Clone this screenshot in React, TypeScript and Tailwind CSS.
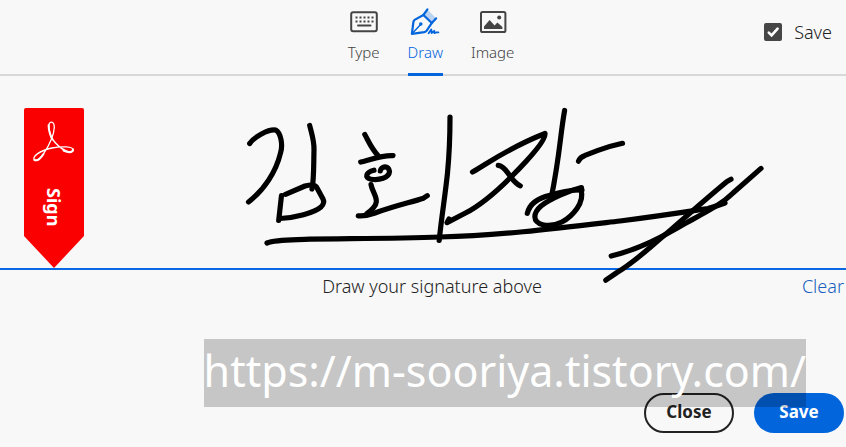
import { useState } from 'react';
import type { ReactNode } from 'react';
import clsx from 'clsx';

type Mode = 'type' | 'draw' | 'image';

function KeyboardIcon() {
  return (
    <svg width="28" height="22" viewBox="0 0 28 22" fill="none" aria-hidden="true">
      <rect x="1.2" y="1.2" width="25.6" height="19" rx="2" stroke="currentColor" strokeWidth="2" />
      <path d="M5.5 6.6h18M5.5 10.4h18" stroke="currentColor" strokeWidth="2" strokeDasharray="2 2" />
      <path d="M8 14.4h12.5" stroke="currentColor" strokeWidth="2" strokeLinecap="round" />
    </svg>
  );
}

function PenIcon() {
  return (
    <svg width="30" height="28" viewBox="0 0 30 28" fill="none" aria-hidden="true">
      <path d="M13.6 7 17.4 1.6 26 10.2l-4.2 4.6z" fill="currentColor" opacity="0.25" />
      <g stroke="currentColor" strokeWidth="2.2" strokeLinecap="round" strokeLinejoin="round">
        <path d="M17.4 1.4 13.4 7l8.4 8 4.2-4.6" />
        <path d="M13.4 7 5 11.6Q3.6 12.4 3.4 14L1.9 25.8l12.3-1.6q1.6-.3 2.5-1.6l5-7.4" />
        <path d="M2.2 25.6 10.4 16.8" strokeWidth="1.4" />
        <path d="M18.6 25.2 21.3 21.4 21.6 25.2 24.2 22.8 24.4 25.2 26.2 24.4 28.4 24.4" strokeWidth="1.8" />
      </g>
      <circle cx="10.8" cy="16" r="1.8" fill="currentColor" />
    </svg>
  );
}

function ImageIcon() {
  return (
    <svg width="28" height="24" viewBox="0 0 28 24" fill="none" aria-hidden="true">
      <rect x="2" y="2" width="24.4" height="20" rx="1.6" stroke="currentColor" strokeWidth="2" />
      <path d="M5 19v-2.4L10.6 10l5 5.4 2.8-3 5 4.6v2z" fill="currentColor" />
      <circle cx="20.2" cy="7.6" r="2" fill="currentColor" />
    </svg>
  );
}

const TABS: { id: Mode; label: string; icon: ReactNode }[] = [
  { id: 'type', label: 'Type', icon: <KeyboardIcon /> },
  { id: 'draw', label: 'Draw', icon: <PenIcon /> },
  { id: 'image', label: 'Image', icon: <ImageIcon /> },
];

// Pen strokes, one path per stroke, in canvas coordinates.
const STROKES = [
  'M249.7 143.5C254 137 268 129 275.7 130C281 133 283 145 280.5 153C276 172 264 190 248.5 202',
  'M309.7 125.5C312 135 314.3 141 314 150C313.6 165 314 180 312 189',
  'M281.5 195.5L278.7 220.5',
  'M285.5 194.3L305 186Q314 183.5 316.5 187L323 199Q325 203 321 207C314 213 295 218 280 218.5',
  'M364.8 134.5C368 140 371 148 378 155.5',
  'M360.7 162C370 160 382 155 393 155.7',
  'M374 170.2C366 172 364 178 371 179.2C379 180.5 389 178 389.5 171.5C389 165 381 166 380.3 171',
  'M371 184.5C372 191 377 196 376.3 202C376 206 371 211 367 213.5',
  'M358.3 215.8C366 216.5 369 215 377 212.3C394 206 412 202 423.5 198.2L427.3 195.7',
  'M450 117C450 135 449.5 152 447.5 173C445 197 441.5 217 439.2 240.5',
  'M472.5 172C490 162 508 148 545 133.5C546 140 530 158 511 177C492 196 479 206 465 213.3L447 222.6L449 219',
  'M498.2 165.4C504 166 507 172 510 176Q516 184 520.3 185.8',
  'M564.6 110.5C560 136 560 155 551 199',
  'M578.5 161.2Q580 157 585 155.4L598 150.4Q610 146 622.5 143.3',
  'M527.3 213.3C530 203 538 198 550 195.4Q564 190 582 190',
  'M581.5 187.6C568 191 550 199 541 206C533 213 532 222 543 224.8C556 227.5 569 220 577 208.5C582 201 583 196 581 190',
  'M267 243C275 239.5 290 240 310 239.2C360 238.5 400 238.5 440 237C500 235.5 560 228 620 221C660 216 685 212 708 208.5Q717 206 725 203',
  'M611.2 256C640 249 662 237 686 223C708 211 722 204 733 193L761 168.4',
  'M605.8 280.2L617 272.5C635 262 650 247 668 232.3C690 213 707 198 727 181.5L731 179.3',
];

function SignRibbon() {
  return (
    <div className="ml-6 flex h-40 w-15 flex-col items-center rounded-t-xs bg-[#fb0000] pt-3 text-white [clip-path:polygon(0_0,100%_0,100%_80%,50%_100%,0_80%)]">
      <svg width="44" height="44" viewBox="0 0 44 44" fill="none" aria-hidden="true">
        <g stroke="currentColor" strokeLinecap="round">
          <path
            d="M19.5 18C16.5 10 15.5 2.2 19.4 2.2C23.6 2.2 22.8 11 19.5 19C15.8 28 8.5 40.5 3 40.5C-1.5 37 8 30.5 20 28C30 26 41 26.5 41.2 30C41 34 30 32.5 19.5 18Z"
            strokeWidth="1.3"
          />
          <path d="M16.6 5.2C16.5 10 18.8 17 20.5 19.3M31.5 30.5C36.5 33 41 32.8 41 29.6M11.5 34C8 39.5 5 41.4 2.3 39.8" strokeWidth="2" />
        </g>
      </svg>
      <span className="mt-6 text-lg leading-6 font-bold [writing-mode:vertical-rl]">Sign</span>
    </div>
  );
}

function SignatureCanvas() {
  return (
    <section className="relative border-b-2 border-[#0a68e4] pt-8">
      <SignRibbon />
      <svg
        className="absolute inset-x-0 top-0 h-[194px] w-full overflow-visible"
        viewBox="0 76 846 194"
        fill="none"
        role="img"
        aria-label="Signature"
      >
        <g stroke="#000" strokeWidth="5.2" strokeLinecap="round" strokeLinejoin="round">
          {STROKES.map(d => (
            <path key={d} d={d} />
          ))}
        </g>
      </svg>
    </section>
  );
}

export default function App() {
  const [mode, setMode] = useState<Mode>('draw');
  const [save, setSave] = useState(true);

  return (
    <main className="relative min-h-screen overflow-hidden bg-[#f8f8f8] font-['Noto_Sans','Noto_Sans_CJK_KR',sans-serif] text-[#222]">
      <header className="grid h-19 grid-cols-[1fr_auto_1fr] border-b-2 border-[#d8d8d8] pr-3.5 pl-7.5">
        <nav className="col-start-2 flex gap-7">
          {TABS.map(tab => (
            <button
              key={tab.id}
              type="button"
              onClick={() => setMode(tab.id)}
              aria-pressed={mode === tab.id}
              className={clsx(
                '-mb-0.5 flex flex-col items-center border-b-3 pt-2 text-[15px] leading-5',
                mode === tab.id ? 'border-[#0265dc] text-[#0265dc]' : 'border-transparent text-[#444]',
              )}
            >
              <span className="flex h-7 items-center">{tab.icon}</span>
              <span className="mt-1.5 font-light">{tab.label}</span>
            </button>
          ))}
        </nav>
        <label className="mt-0.5 flex items-center gap-3 justify-self-end pb-3 text-lg font-light">
          <span className="relative flex size-[18px]">
            <input
              type="checkbox"
              checked={save}
              onChange={e => setSave(e.target.checked)}
              className="size-[18px] appearance-none rounded-xs border-2 border-[#464646] checked:bg-[#464646]"
            />
            {save && (
              <svg
                className="pointer-events-none absolute inset-0"
                width="18"
                height="18"
                viewBox="0 0 18 18"
                fill="none"
                aria-hidden="true"
              >
                <path d="M4.8 9.6 7.6 12.4 13.6 5.6" stroke="#fff" strokeWidth="2.6" strokeLinecap="round" />
              </svg>
            )}
          </span>
          Save
        </label>
      </header>

      <SignatureCanvas />

      <div className="grid grid-cols-[1fr_auto_1fr] pt-0.5 pr-0.5 pl-5 text-lg leading-7 font-light">
        <p className="col-start-2">Draw your signature above</p>
        <button type="button" className="justify-self-end text-[#1a5fbe]">
          Clear
        </button>
      </div>

      <footer className="flex justify-end gap-5 pt-[93px] pr-0.5 text-[17px] font-bold">
        <button type="button" className="h-10 w-[90px] rounded-full border-2 border-[#222] pb-0.5">
          Close
        </button>
        <button type="button" className="h-10 w-[90px] rounded-full bg-[#0265dc] pb-0.5 text-white">
          Save
        </button>
      </footer>

      <a
        href="https://m-sooriya.tistory.com/"
        className="absolute right-10 bottom-10 bg-black/20 pb-1 text-[43px] leading-16 whitespace-nowrap text-white"
      >
        https://m-sooriya.tistory.com/
      </a>
    </main>
  );
}
